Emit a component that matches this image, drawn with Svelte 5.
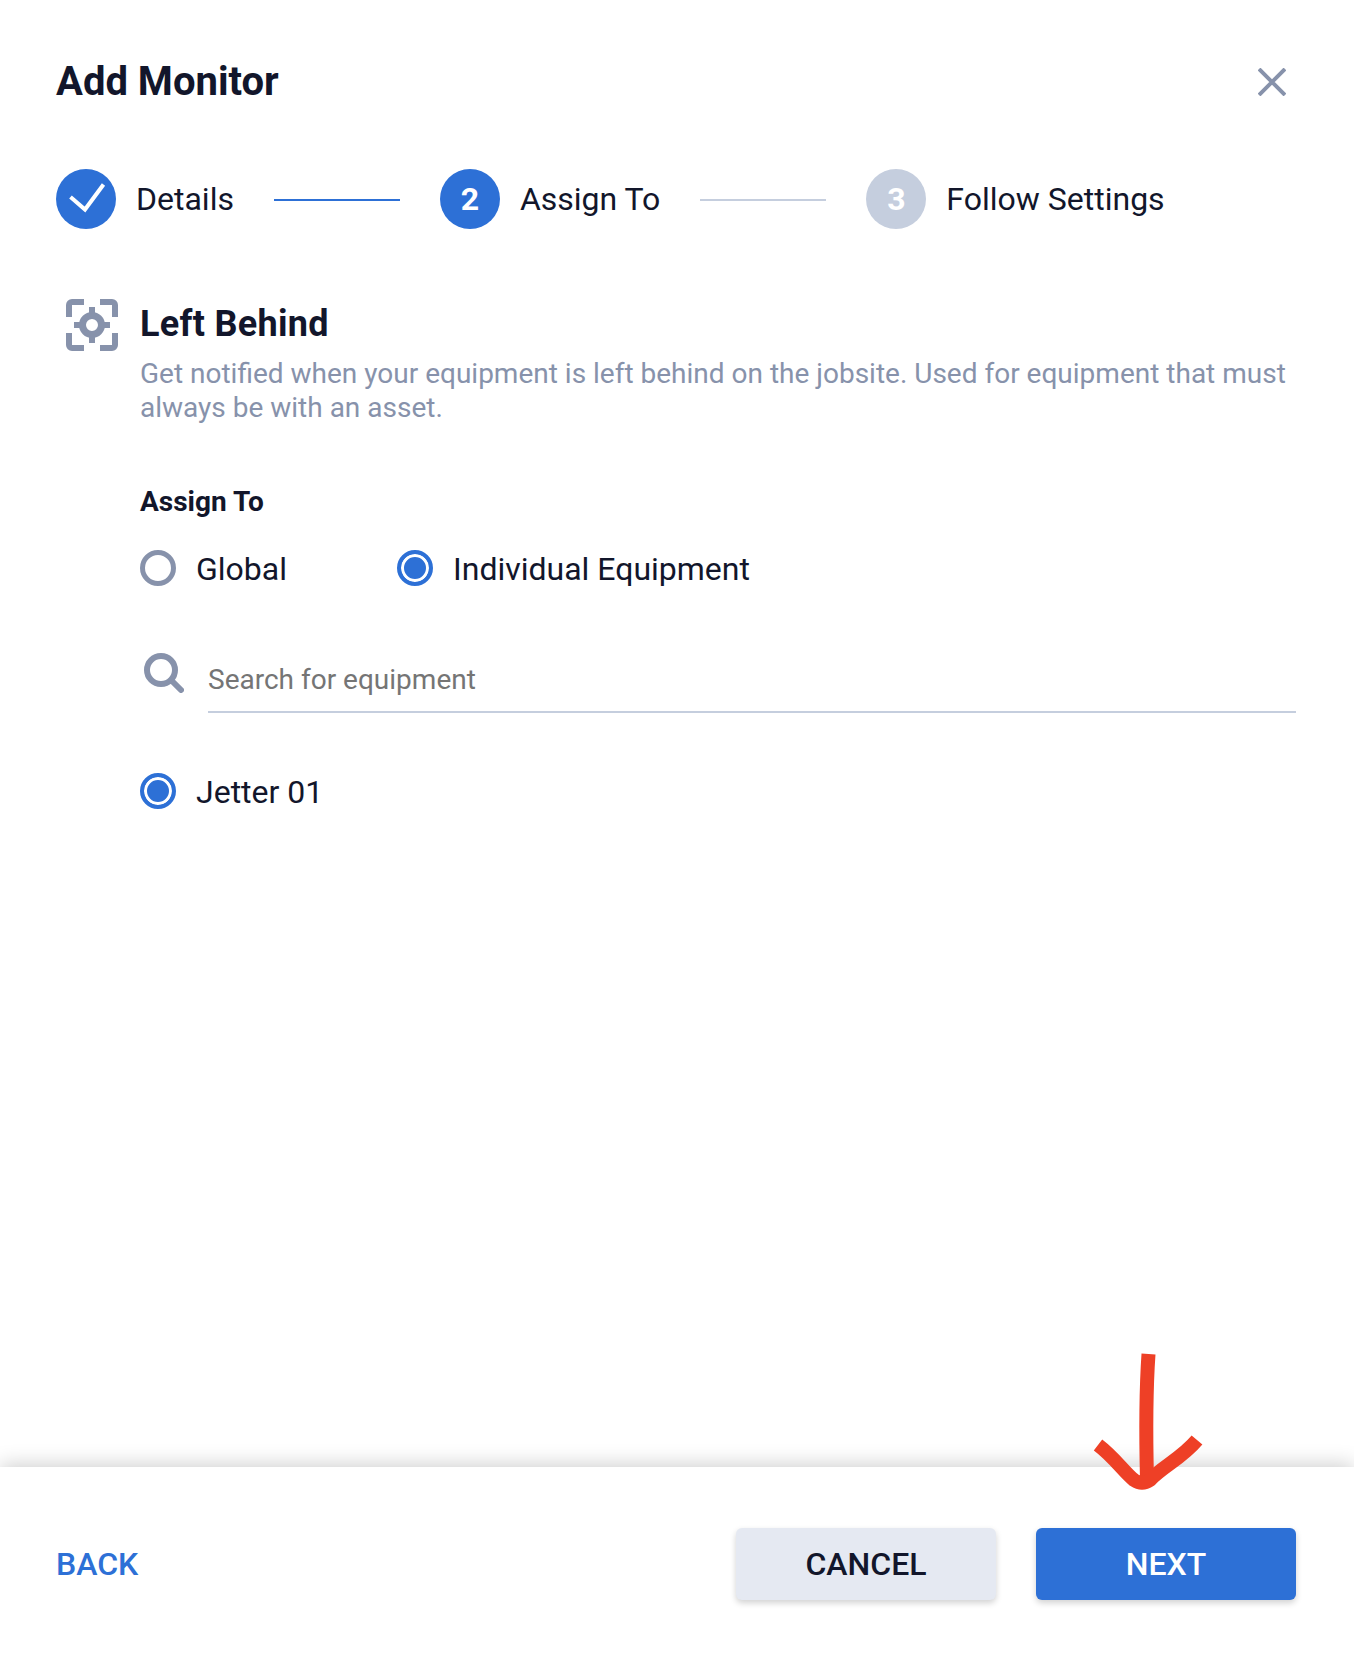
<script>
  const steps = [
    { label: 'Details', state: 'done' },
    { label: 'Assign To', state: 'active', num: 2 },
    { label: 'Follow Settings', state: 'todo', num: 3 }
  ];
</script>

<div class="page">
  <div class="body">
    <header class="title-row">
      <h1>Add Monitor</h1>
      <button class="close" aria-label="Close">
        <svg width="28" height="28" viewBox="0 0 28 28" fill="none" stroke="#8792ab" stroke-width="4">
          <path d="M1 1 L27 27 M27 1 L1 27" />
        </svg>
      </button>
    </header>

    <div class="stepper">
      {#each steps as step, i}
        {#if i > 0}
          <span class="line {step.state}"></span>
        {/if}
        <span class="circle {step.state}">
          {#if step.state === 'done'}
            <svg width="60" height="60" viewBox="0 0 60 60" fill="none" stroke="#fff" stroke-width="4">
              <path d="M14.5 28 L29 40.5 L47.5 15.5" />
            </svg>
          {:else}
            {step.num}
          {/if}
        </span>
        <span class="step-label">{step.label}</span>
      {/each}
    </div>

    <section class="monitor">
      <svg class="target" width="52" height="52" viewBox="0 0 52 52" fill="none" stroke="#8792ab">
        <path stroke-width="6" stroke-linejoin="round" d="M3 18 V6 a3 3 0 0 1 3-3 H18 M34 3 H46 a3 3 0 0 1 3 3 V18 M49 34 V46 a3 3 0 0 1-3 3 H34 M18 49 H6 a3 3 0 0 1-3-3 V34" />
        <circle cx="26" cy="26" r="9.5" stroke-width="7" />
        <path stroke-width="6" d="M26 8 V15 M26 37 V44 M8 26 H15 M37 26 H44" />
      </svg>
      <div class="monitor-text">
        <h2>Left Behind</h2>
        <p>Get notified when your equipment is left behind on the jobsite. Used for equipment that must always be with an asset.</p>

        <h3>Assign To</h3>
        <div class="radios">
          <label class="radio global"><span class="dot"></span>Global</label>
          <label class="radio on"><span class="dot"></span>Individual Equipment</label>
        </div>

        <div class="search">
          <svg width="40" height="40" viewBox="0 0 40 40" fill="none" stroke="#8792ab" stroke-width="6" stroke-linecap="round">
            <circle cx="17" cy="17" r="14" />
            <path d="M28 28 L37 37" />
          </svg>
          <input type="text" placeholder="Search for equipment" />
        </div>

        <label class="radio on"><span class="dot"></span>Jetter 01</label>
      </div>
    </section>
  </div>

  <footer>
    <button class="back">BACK</button>
    <div class="actions">
      <button class="btn cancel">CANCEL</button>
      <button class="btn next">NEXT</button>
    </div>
  </footer>

  <svg class="arrow" width="130" height="150" viewBox="0 0 130 150" fill="none" stroke="#ee4026" stroke-width="14">
    <path d="M68.5 4 C66 40 66 90 67 130" />
    <path d="M18 95 C34 107 44 122 54 130 C60 134 64 134 70 130 C82 117 102 108 117 90" />
  </svg>
</div>

<style>
  :global(body) {
    margin: 0;
    background: #fff;
  }

  .page {
    position: relative;
    width: 1354px;
    height: 1656px;
    display: flex;
    flex-direction: column;
    overflow: hidden;
    font-family: Roboto, sans-serif;
    color: #12162b;
  }

  .body {
    flex: 1;
    padding: 0 58px 0 56px;
  }

  .title-row {
    height: 162px;
    display: flex;
    justify-content: space-between;
    align-items: center;
  }

  h1 {
    margin: 0;
    font-size: 40px;
    font-weight: 700;
  }

  .close {
    border: 0;
    background: none;
    padding: 0;
    display: flex;
    margin: 2px 10px 0 0;
  }

  .stepper {
    display: flex;
    align-items: center;
    height: 60px;
    margin-top: 7px;
  }

  .circle {
    width: 60px;
    height: 60px;
    border-radius: 50%;
    display: flex;
    align-items: center;
    justify-content: center;
    background: #2d70d6;
    color: #fff;
    font-size: 32px;
    font-weight: 700;
    flex: none;
  }

  .circle.todo {
    background: #c5cede;
  }

  .step-label {
    margin-left: 20px;
    font-size: 32px;
  }

  .line {
    width: 126px;
    height: 2px;
    margin: 2px 40px 0;
    background: #2d70d6;
  }

  .line.todo {
    background: #c5cede;
  }

  .monitor {
    display: flex;
    margin-top: 70px;
    padding-left: 10px;
  }

  .target {
    flex: none;
    margin-right: 22px;
  }

  .monitor-text {
    flex: 1;
  }

  h2 {
    margin: 3px 0 0;
    font-size: 36px;
    font-weight: 700;
    line-height: 44px;
    letter-spacing: 0.3px;
  }

  p {
    margin: 11px 0 0;
    font-size: 28px;
    line-height: 34px;
    color: #8792ab;
  }

  h3 {
    margin: 60px 0 0;
    font-size: 28px;
    font-weight: 700;
    line-height: 34px;
  }

  .radios {
    display: flex;
    margin-top: 32px;
  }

  .radio {
    display: flex;
    align-items: center;
    font-size: 32px;
    line-height: 36px;
  }

  .global {
    width: 257px;
  }

  .dot {
    box-sizing: border-box;
    width: 36px;
    height: 36px;
    border-radius: 50%;
    border: 5px solid #8792ab;
    margin: -3px 20px 0 0;
    flex: none;
  }

  .on .dot {
    border-width: 4px;
    border-color: #2d70d6;
    background: #2d70d6;
    box-shadow: inset 0 0 0 3px #fff;
  }

  .search {
    display: flex;
    align-items: flex-start;
    margin: 67px 0 60px;
    height: 60px;
  }

  .search svg {
    margin: -1px 24px 0 4px;
    flex: none;
  }

  input {
    flex: 1;
    min-width: 0;
    height: 60px;
    box-sizing: border-box;
    margin-top: -1px;
    border: 0;
    border-bottom: 2px solid #c5cede;
    outline: 0;
    padding: 0 0 6px;
    font: 28px Roboto, sans-serif;
    color: #12162b;
  }

  input::placeholder {
    color: #757575;
    opacity: 1;
  }

  footer {
    position: relative;
    height: 189px;
    box-sizing: border-box;
    padding: 61px 58px 0 56px;
    display: flex;
    justify-content: space-between;
    align-items: flex-start;
    background: #fff;
    box-shadow: 0 -2px 20px rgba(0, 0, 0, 0.2);
  }

  button {
    font-family: inherit;
  }

  .back {
    height: 72px;
    border: 0;
    background: none;
    padding: 0;
    color: #2d70d6;
    font-size: 32px;
    font-weight: 500;
  }

  .actions {
    display: flex;
    gap: 40px;
  }

  .btn {
    width: 260px;
    height: 72px;
    border: 0;
    border-radius: 6px;
    font-size: 32px;
    font-weight: 500;
    box-shadow: 0 3px 6px rgba(0, 0, 0, 0.18);
  }

  .cancel {
    background: #e5e9f2;
    color: #12162b;
  }

  .next {
    background: #2d70d6;
    color: #fff;
  }

  .arrow {
    position: absolute;
    left: 1080px;
    top: 1350px;
  }
</style>
